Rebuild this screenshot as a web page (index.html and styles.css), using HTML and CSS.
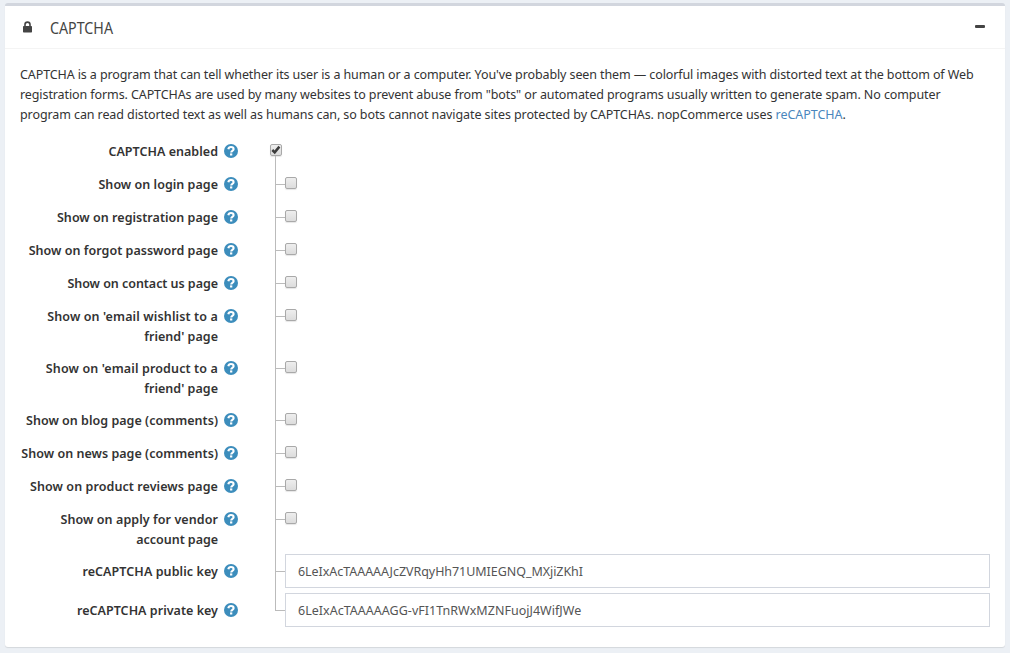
FILE: index.html
```html
<!DOCTYPE html>
<html lang="en">
<head>
<meta charset="utf-8">
<title>CAPTCHA</title>
<link rel="stylesheet" href="styles.css">
</head>
<body>
<svg class="defs" width="0" height="0">
  <symbol id="help" viewBox="0 0 14 14">
    <circle cx="7" cy="7" r="7" fill="#3c8dbc"/>
    <path d="M4.300 5.300C4.600 3.700 5.600 3 7 3c1.500 0 2.600.9 2.600 2.200 0 1.700-2.400 1.700-2.400 3.200" fill="none" stroke="#fff" stroke-width="2.100"/>
    <rect x="6.050" y="9.400" width="2.250" height="2.100" fill="#fff"/>
  </symbol>
</svg>
<section class="panel">
  <header class="panel-header">
    <svg class="lock" width="9" height="12" viewBox="0 0 9 12"><path d="M2 6V3.600a2.500 2.500 0 0 1 5 0V6" fill="none" stroke="#444" stroke-width="1.600"/><rect y="5" width="9" height="6.500" rx=".7" fill="#444"/></svg>
    <h1 class="title">CAPTCHA</h1>
    <span class="collapse"></span>
  </header>
  <div class="panel-body">
    <p class="intro">
      <span class="line l1">CAPTCHA is a program that can tell whether its user is a human or a computer. You've probably seen them — colorful images with distorted text at the bottom of Web</span>
      <span class="line l2">registration forms. CAPTCHAs are used by many websites to prevent abuse from "bots" or automated programs usually written to generate spam. No computer</span>
      <span class="line l3">program can read distorted text as well as humans can, so bots cannot navigate sites protected by CAPTCHAs. nopCommerce uses <a class="link">reCAPTCHA</a>.</span>
    </p>
    <div class="form">
      <div class="row parent"><label class="label">CAPTCHA enabled</label><svg class="help"><use href="#help"/></svg><div class="field"><span class="check"><svg width="12" height="12" viewBox="0 0 12 12"><path d="M2.300 6l2.400 2.300L9.400 2.600" fill="none" stroke="#3c3c3c" stroke-width="2.500"/></svg></span></div></div>
      <div class="row"><label class="label">Show on login page</label><svg class="help"><use href="#help"/></svg><div class="field"><i class="branch"></i><span class="check"></span></div></div>
      <div class="row"><label class="label">Show on registration page</label><svg class="help"><use href="#help"/></svg><div class="field"><i class="branch"></i><span class="check"></span></div></div>
      <div class="row"><label class="label">Show on forgot password page</label><svg class="help"><use href="#help"/></svg><div class="field"><i class="branch"></i><span class="check"></span></div></div>
      <div class="row"><label class="label tight">Show on contact us page</label><svg class="help"><use href="#help"/></svg><div class="field"><i class="branch"></i><span class="check"></span></div></div>
      <div class="row tall"><label class="label"><span class="wide">Show on 'email wishlist to a</span><br>friend' page</label><svg class="help"><use href="#help"/></svg><div class="field"><i class="branch"></i><span class="check"></span></div></div>
      <div class="row tall"><label class="label"><span class="wide">Show on 'email product to a</span><br>friend' page</label><svg class="help"><use href="#help"/></svg><div class="field"><i class="branch"></i><span class="check"></span></div></div>
      <div class="row"><label class="label">Show on blog page (comments)</label><svg class="help"><use href="#help"/></svg><div class="field"><i class="branch"></i><span class="check"></span></div></div>
      <div class="row"><label class="label">Show on news page (comments)</label><svg class="help"><use href="#help"/></svg><div class="field"><i class="branch"></i><span class="check"></span></div></div>
      <div class="row"><label class="label medium">Show on product reviews page</label><svg class="help"><use href="#help"/></svg><div class="field"><i class="branch"></i><span class="check"></span></div></div>
      <div class="row tall"><label class="label"><span class="medium">Show on apply for vendor</span><br><span class="tight">account page</span></label><svg class="help"><use href="#help"/></svg><div class="field"><i class="branch"></i><span class="check"></span></div></div>
      <div class="row key"><label class="label medium">reCAPTCHA public key</label><svg class="help"><use href="#help"/></svg><div class="field"><i class="branch"></i><div class="input k1">6LeIxAcTAAAAAJcZVRqyHh71UMIEGNQ_MXjiZKhI</div></div></div>
      <div class="row key last"><label class="label">reCAPTCHA private key</label><svg class="help"><use href="#help"/></svg><div class="field"><i class="branch"></i><div class="input k2">6LeIxAcTAAAAAGG-vFI1TnRWxMZNFuojJ4WifJWe</div></div></div>
    </div>
  </div>
</section>
</body>
</html>
```
FILE: styles.css
```css
* { box-sizing: border-box; }
body {
  margin: 0;
  padding: 3px 5px 6px;
  height: 653px;
  overflow: hidden;
  background: #ecf0f5;
  color: #333;
  font: 12.5px/20px "Noto Sans", sans-serif;
}
.defs { display: block; }
.panel {
  height: 644px;
  background: #fff;
  border-top: 3px solid #d2d6de;
  border-radius: 3px;
  box-shadow: 0 1px 1px rgba(0, 0, 0, .1);
}
.panel-header {
  display: flex;
  align-items: center;
  height: 43px;
  padding: 0 20px 0 18px;
  border-bottom: 1px solid #f4f4f4;
  color: #444;
}
.lock { margin-right: 18px; }
.title {
  flex: 1;
  margin: 0;
  padding-top: 1px;
  font-size: 16px;
  font-weight: 400;
  transform: scaleX(.89);
  transform-origin: left;
}
.collapse {
  width: 10px;
  height: 3px;
  margin-bottom: 2px;
  border-radius: 1px;
  background: #444;
}
.panel-body { padding: 16px 15px 0; }
.intro { margin: 0 0 9px; white-space: nowrap; }
.line { display: block; }
.l1 { letter-spacing: -.105px; }
.l2 { letter-spacing: -.096px; }
.l3 { letter-spacing: -.093px; }
.link { color: #4a86bd; letter-spacing: -.03px; }
.form { display: flex; flex-direction: column; }
.row {
  display: grid;
  grid-template-columns: 198px 14px minmax(0, 1fr);
  column-gap: 6px;
  height: 33px;
}
.tall { height: 52px; }
.key { height: 39px; }
.label {
  padding-top: 8px;
  text-align: right;
  white-space: nowrap;
  font-weight: 600;
  letter-spacing: .03px;
}
.tight { letter-spacing: -.04px; }
.medium { letter-spacing: .08px; }
.wide { letter-spacing: .13px; }
.help { width: 14px; height: 14px; margin-top: 10px; }
.field {
  display: flex;
  align-items: flex-start;
  margin-left: 31px;
  border-left: 1px solid #bbb;
}
.parent .field { margin-left: 26px; padding-top: 10px; border: 0; flex-direction: column; }
.parent .field::after {
  content: "";
  flex: 1;
  margin-left: 5px;
  border-left: 1px solid #bbb;
}
.parent .check { margin: 0; }
.last .field { height: 18px; }
.branch { flex: none; width: 9px; height: 1px; margin-top: 17px; background: #bbb; }
.check {
  flex: none;
  display: flex;
  width: 12px;
  height: 12px;
  margin-top: 10px;
  border: 1px solid #a9a9a9;
  border-radius: 2px;
  background: linear-gradient(#eee, #dcdcdc);
  box-shadow: 0 1px 1px rgba(0, 0, 0, .1);
}
.check svg { flex: none; margin: -1px; }
.input {
  flex: 1;
  height: 34px;
  padding: 7px 12px 5px;
  border: 1px solid #d2d6de;
  background: #fff;
  color: #555;
}
.k1 { letter-spacing: -.05px; }
.k2 { letter-spacing: .02px; }
```
